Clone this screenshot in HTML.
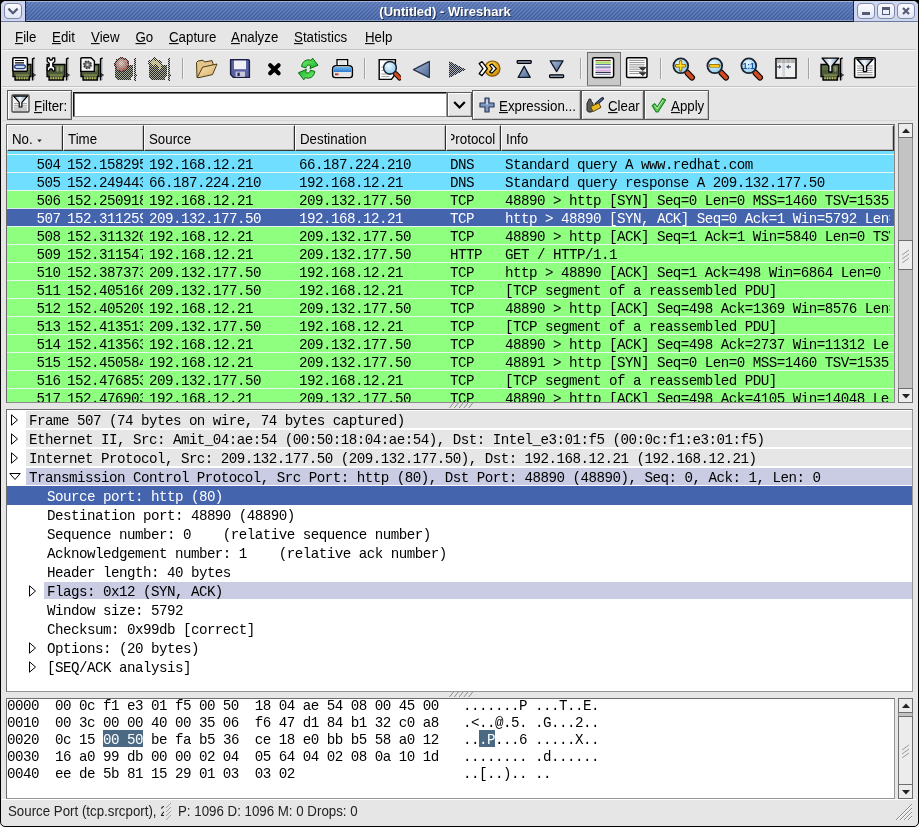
<!DOCTYPE html><html><head><meta charset="utf-8"><title>(Untitled) - Wireshark</title><style>
*{box-sizing:border-box;margin:0;padding:0}
html,body{width:919px;height:827px;overflow:hidden;background:#000}
body{position:relative;font-family:"Liberation Sans",sans-serif;font-size:13px;color:#000}
.a{position:absolute}
.win{left:0;top:0;width:919px;height:827px;background:#e6e6e6;border:1px solid #000;border-radius:6px 6px 5px 5px;overflow:hidden;will-change:transform}
.t{position:absolute;white-space:pre;line-height:1}
.m{font-family:"Liberation Mono",monospace;font-size:14.2px;letter-spacing:-0.52px}
.ui{font-size:13.3px;transform:scaleY(1.09);transform-origin:0 11.3px}
u{text-decoration:underline;text-underline-offset:1px}
.row{position:absolute;left:7px;width:887px;height:17px;overflow:hidden}
.row .t{top:3px}
.sepw{position:absolute;left:7px;width:887px;height:1px}
.hdr{position:absolute;top:125px;height:26px;background:#e6e6e6;border-right:1px solid #2e2e2e;border-bottom:1px solid #3a3a3a;border-left:1px solid #fff;border-top:1px solid #fff;box-shadow:inset -1px -1px 0 #bcbcbc;overflow:hidden}
.hdr .t{top:6.5px;left:4px}
.sb{position:absolute;background:#c3c3c3;border:1px solid #8c8c8c}
.sbb{position:absolute;left:-1px;width:15px;height:15px;background:#ececec;border:1px solid #6e6e6e}
.thumb{position:absolute;left:-1px;width:15px;background:#ececec;border:1px solid #6e6e6e}
.btn{position:absolute;background:#e6e6e6;border:1px solid #5a5a5a;box-shadow:inset 1px 1px 0 #fff, inset -1px -1px 0 #c0c0c0}
</style></head><body>
<div class="a" style="left:0;top:815px;width:919px;height:12px;background:#f0f0f0"></div>
<div class="a win">
<div class="a" style="left:-1px;top:-1px;width:919px;height:827px">
<div class="a" style="left:1px;top:1px;width:917px;height:20px;background:#cdd5ef"></div>
<div class="a" style="left:1px;top:21px;width:917px;height:1px;background:#6c7a9e"></div>
<svg class="a" style="left:25px;top:1px" width="829" height="21" viewBox="0 0 829 21"><defs><pattern id="hat" width="4" height="4" patternUnits="userSpaceOnUse"><rect width="4" height="4" fill="#6080c4"/><path d="M-1 5 L5 -1 M-1 1 L1 -1 M3 5 L5 3" stroke="#4463a6" stroke-width="1.5"/></pattern><linearGradient id="hatg" x1="0" y1="0" x2="0" y2="1"><stop offset="0" stop-color="#fff" stop-opacity="0.10"/><stop offset="1" stop-color="#000" stop-opacity="0.06"/></linearGradient></defs><rect width="829" height="21" fill="url(#hat)"/><rect width="829" height="21" fill="url(#hatg)"/><rect x="0" y="0" width="829" height="1" fill="#a3b3dc"/><rect x="0" y="19" width="829" height="1" fill="#8f9fc4"/><rect x="0" y="20" width="829" height="1" fill="#0c1220"/><rect x="0" y="0" width="1" height="21" fill="#1c2a50"/><rect x="828" y="0" width="1" height="21" fill="#1c2a50"/></svg>
<div class="t" style="left:345px;width:200px;text-align:center;top:5px;font-weight:bold;font-size:13px;color:#fff;text-shadow:1px 1px 0 rgba(0,0,0,0.55)">(Untitled) - Wireshark</div>
<div class="a" style="left:4px;top:3px;width:18px;height:16px;border:1px solid #7f89a8;border-radius:4px;background:linear-gradient(#fbfbff,#e2e6f6)"><svg class="a" style="left:2px;top:3px" width="12" height="9" viewBox="0 0 12 9"><path d="M1.4 1.6 L6 6.2 L10.6 1.6" fill="none" stroke="#565c78" stroke-width="2.3"/></svg></div>
<div class="a" style="left:857px;top:3px;width:18px;height:16px;border:1px solid #7f89a8;border-radius:4px;background:linear-gradient(#fbfbff,#e2e6f6)"><div class="a" style="left:4px;top:8px;width:8px;height:3px;background:#565c78"></div></div>
<div class="a" style="left:877px;top:3px;width:18px;height:16px;border:1px solid #7f89a8;border-radius:4px;background:linear-gradient(#fbfbff,#e2e6f6)"><div class="a" style="left:4px;top:3px;width:8px;height:8px;border:1px solid #565c78;border-top-width:3px"></div></div>
<div class="a" style="left:897px;top:3px;width:18px;height:16px;border:1px solid #7f89a8;border-radius:4px;background:linear-gradient(#fbfbff,#e2e6f6)"><svg class="a" style="left:4px;top:3px" width="8" height="8" viewBox="0 0 8 8"><path d="M1 1 L7 7 M7 1 L1 7" fill="none" stroke="#565c78" stroke-width="2.2"/></svg></div>
<div class="t ui" style="left:15px;top:31px"><u>F</u>ile</div>
<div class="t ui" style="left:52px;top:31px"><u>E</u>dit</div>
<div class="t ui" style="left:91px;top:31px"><u>V</u>iew</div>
<div class="t ui" style="left:135.5px;top:31px"><u>G</u>o</div>
<div class="t ui" style="left:169px;top:31px"><u>C</u>apture</div>
<div class="t ui" style="left:231px;top:31px"><u>A</u>nalyze</div>
<div class="t ui" style="left:294px;top:31px"><u>S</u>tatistics</div>
<div class="t ui" style="left:365px;top:31px"><u>H</u>elp</div>
<div class="a" style="left:2px;top:49px;width:914px;height:1px;background:#c4c4c4"></div>
<div class="a" style="left:2px;top:50px;width:914px;height:1px;background:#f6f6f6"></div>
<svg width="0" height="0" style="position:absolute"><defs>
<linearGradient id="gFun" x1="0" y1="0" x2="1" y2="0"><stop offset="0" stop-color="#7fa0c0"/><stop offset="0.45" stop-color="#f4f8fc"/><stop offset="1" stop-color="#6f90b4"/></linearGradient>
<linearGradient id="gTri" x1="0" y1="0" x2="1" y2="1"><stop offset="0" stop-color="#a9bcdc"/><stop offset="1" stop-color="#4d6692"/></linearGradient>
<radialGradient id="gLens" cx="0.4" cy="0.35" r="0.7"><stop offset="0" stop-color="#e8f8ff"/><stop offset="1" stop-color="#8cc8ec"/></radialGradient>
<radialGradient id="gGold" cx="0.4" cy="0.35" r="0.7"><stop offset="0" stop-color="#ffe060"/><stop offset="1" stop-color="#d08800"/></radialGradient>
<radialGradient id="gStop" cx="0.45" cy="0.4" r="0.6"><stop offset="0" stop-color="#f4e4dc"/><stop offset="1" stop-color="#a05a50"/></radialGradient>
<linearGradient id="gFold" x1="0" y1="0" x2="1" y2="1"><stop offset="0" stop-color="#f8e4b0"/><stop offset="1" stop-color="#d8b070"/></linearGradient>
<linearGradient id="gPrn" x1="0" y1="0" x2="0" y2="1"><stop offset="0" stop-color="#70b8f0"/><stop offset="1" stop-color="#2c78d0"/></linearGradient>
<linearGradient id="gGrn" x1="0" y1="0" x2="1" y2="1"><stop offset="0" stop-color="#78f070"/><stop offset="1" stop-color="#18b428"/></linearGradient>
<pattern id="stip" width="2" height="2" patternUnits="userSpaceOnUse"><rect width="2" height="2" fill="#e6e6e6"/><rect width="1" height="1" fill="#3c3c3c"/><rect x="1" y="1" width="1" height="1" fill="#3c3c3c"/></pattern>
<pattern id="stipd" width="2" height="2" patternUnits="userSpaceOnUse"><rect width="1" height="1" fill="#262626"/><rect x="1" y="1" width="1" height="1" fill="#262626"/></pattern>
<g id="nic">
<path d="M22.6 1 L20.6 2 L20.6 23.6" stroke="#000" stroke-width="1.5" fill="none"/>
<path d="M21.9 3 L21.9 16 M21.9 20 L21.9 23" stroke="#9a9a9a" stroke-width="1" fill="none"/>
<path d="M21.2 16.4 L23.6 18 L21.2 19.8 Z" fill="#505050" stroke="#000" stroke-width="0.6"/>
<path d="M1 7.5 L19 7.5 L19 19.5 L17.5 19.5 L17.5 23 L3 23 L3 19.5 L1 19.5 Z" fill="#4c5838" stroke="#000" stroke-width="1.3"/>
<rect x="2" y="8.6" width="16" height="4.4" fill="#5f7046" opacity="0.8"/>
<rect x="10.6" y="9.5" width="2" height="5" fill="#8c9c74"/><rect x="14.4" y="9.5" width="2" height="5" fill="#8c9c74"/>
<rect x="3.8" y="17.2" width="13" height="2" fill="#74844c"/>
<path d="M5 20.2 v2 M7.5 20.2 v2 M10 20.2 v2 M12.5 20.2 v2 M15 20.2 v2" stroke="#c8c464" stroke-width="1.3"/>
</g>
<g id="nicd">
<path d="M20.4 1.4 L21.8 0.6 L21.8 16.6 L23.6 18.4 L21.8 19.8 L21.8 23.6 L20.4 23.6 Z" fill="#c4c4c4"/>
<path d="M20.4 1.4 L21.8 0.6 L21.8 16.6 L23.6 18.4 L21.8 19.8 L21.8 23.6 L20.4 23.6 Z" fill="url(#stipd)"/>
<path d="M2 7.6 L17.6 7.6 L18.6 8.6 L18.6 19.4 L16.6 20.6 L16.6 23.4 L4 23.4 L2.4 21.6 L0.6 19.4 L0.6 9 Z" fill="#a6ae98"/>
<path d="M2 7.6 L17.6 7.6 L18.6 8.6 L18.6 19.4 L16.6 20.6 L16.6 23.4 L4 23.4 L2.4 21.6 L0.6 19.4 L0.6 9 Z" fill="url(#stipd)"/>
</g>
<g id="funnel"><path d="M0.7 0.7 L17.3 0.7 L10.6 8.5 L10.6 14.3 L7.4 14.3 L7.4 8.5 Z" fill="url(#gFun)" stroke="#000" stroke-width="1.4" stroke-linejoin="round"/></g>
<g id="mag">
<path d="M15.4 15.8 L20 20.6" stroke="#000" stroke-width="6" stroke-linecap="round"/>
<path d="M15.2 15.6 L20 20.6" stroke="#d44a20" stroke-width="3.8" stroke-linecap="round"/>
<circle cx="8.8" cy="8.8" r="7.4" fill="url(#gLens)" stroke="#1c2430" stroke-width="1.8"/>
</g>
</defs></svg>
<div class="a" style="left:587px;top:52px;width:34px;height:34px;background:#c8c8c8;border:1px solid #6c6c6c;border-bottom-color:#8c8c8c"></div>
<svg class="a" style="left:12px;top:57px" width="24" height="24" viewBox="0 0 24 24" ><use href="#nic"/><rect x="0.8" y="0.8" width="14.6" height="13.4" rx="1" fill="#fff" stroke="#000" stroke-width="1.5"/><path d="M3 3.5 h9 M3 5.8 h9" stroke="#000" stroke-width="1.2"/><rect x="2.6" y="8" width="10.8" height="3.6" rx="1.8" fill="#c8dcf4" stroke="#203880" stroke-width="1.3"/></svg>
<svg class="a" style="left:46px;top:57px" width="24" height="24" viewBox="0 0 24 24" ><use href="#nic"/><path d="M1.2 1 L3.3 1 L4 3 L6 3 L6.7 1 L8.8 1 L8.8 4.5 L6.8 6.2 L6.8 9 L8.8 10.6 L8.8 13.8 L6.7 13.8 L6 12 L4 12 L3.3 13.8 L1.2 13.8 L1.2 10.6 L3.2 9 L3.2 6.2 L1.2 4.5 Z" fill="#fff" stroke="#000" stroke-width="1.3" stroke-linejoin="round"/></svg>
<svg class="a" style="left:80px;top:57px" width="24" height="24" viewBox="0 0 24 24" ><use href="#nic"/><path d="M0.8 2 Q0.8 0.8 2 0.8 L11 0.8 L14.4 4 L14.4 14.4 L0.8 14.4 Z" fill="#f4f4f4" stroke="#000" stroke-width="1.4"/><circle cx="7.5" cy="7.8" r="3.6" fill="#707070" stroke="#333" stroke-width="1.6" stroke-dasharray="1.6 1.2"/><circle cx="7.5" cy="7.8" r="1.2" fill="#d8d8d8"/></svg>
<svg class="a" style="left:114px;top:57px" width="24" height="24" viewBox="0 0 24 24" shape-rendering="crispEdges"><use href="#nicd"/><circle cx="7.8" cy="7.8" r="7.4" fill="url(#gStop)"/><circle cx="7.8" cy="7.8" r="6.8" fill="none" stroke="url(#stipd)" stroke-width="1.8"/><circle cx="7.8" cy="7.8" r="5.6" fill="url(#stipd)" opacity="0.3"/></svg>
<svg class="a" style="left:148px;top:57px" width="24" height="24" viewBox="0 0 24 24" shape-rendering="crispEdges"><use href="#nicd"/><path d="M0.4 6 L6.6 0.2 L6.6 3 Q14 3 14 10.4 Q14 13.6 10 13.6 Q10.5 8.4 6.6 8.4 L6.6 11.4 Z" fill="#e0d8a8"/><path d="M0.4 6 L6.6 0.2 L6.6 3 Q14 3 14 10.4 Q14 13.6 10 13.6 Q10.5 8.4 6.6 8.4 L6.6 11.4 Z" fill="none" stroke="url(#stipd)" stroke-width="2.2"/><path d="M0.4 6 L6.6 0.2 L6.6 3 Q14 3 14 10.4 Q14 13.6 10 13.6 Q10.5 8.4 6.6 8.4 L6.6 11.4 Z" fill="url(#stipd)" opacity="0.3"/></svg>
<svg class="a" style="left:194px;top:57px" width="24" height="24" viewBox="0 0 24 24" ><path d="M2.5 5.5 L4 4 L9 3.2 L10.5 5 L18 3.6 L19 6.5 L19 9 L9 11 L5 20.5 L3 20.5 Z" fill="#e4c488" stroke="#4a3a18" stroke-width="1"/><path d="M5 20.6 L3.2 20.6 L8.6 10.2 L23 7 L18.5 17.6 Z" fill="url(#gFold)" stroke="#4a3a18" stroke-width="1" stroke-linejoin="round"/></svg>
<svg class="a" style="left:228px;top:57px" width="24" height="24" viewBox="0 0 24 24" ><path d="M2.6 2.6 L20 2.6 Q21.4 2.6 21.4 4 L21.4 20.4 L5.5 20.4 L2.6 17.5 Z" fill="#5a62a6" stroke="#1a1c40" stroke-width="1.4" stroke-linejoin="round"/><rect x="6" y="3.6" width="12" height="8.6" fill="#f0f0f4"/><rect x="7.6" y="14.6" width="9.4" height="5.2" fill="#c4c8d8"/><rect x="9.4" y="15.6" width="2.4" height="3.4" fill="#2a2c58"/></svg>
<svg class="a" style="left:262px;top:57px" width="24" height="24" viewBox="0 0 24 24" ><path d="M8.2 8.2 L16.6 16.2 M16.6 8.2 L8.2 16.2" stroke="#000" stroke-width="4.2" stroke-linecap="round"/></svg>
<svg class="a" style="left:296px;top:57px" width="24" height="24" viewBox="0 0 24 24" ><path d="M5.6 9.6 C6 4.6 10.6 1.6 15.2 3.4 L16.6 1.2 L22 8.2 L14 11.6 L14.8 8.8 C12.8 7.4 10.6 8.2 10 10.8 Z" fill="url(#gGrn)" stroke="#0a6a10" stroke-width="1" stroke-linejoin="round"/><path d="M5.6 9.6 C6 4.6 10.6 1.6 15.2 3.4 L16.6 1.2 L22 8.2 L14 11.6 L14.8 8.8 C12.8 7.4 10.6 8.2 10 10.8 Z" transform="rotate(180 12.2 12)" fill="url(#gGrn)" stroke="#0a6a10" stroke-width="1" stroke-linejoin="round"/></svg>
<svg class="a" style="left:330px;top:57px" width="24" height="24" viewBox="0 0 24 24" ><path d="M7 9 L7 2.6 L17.6 2.6 L17.6 9" fill="#fff" stroke="#000" stroke-width="1.3"/><path d="M9 5 h6.5 M9 7 h6.5" stroke="#c8c8c8" stroke-width="1"/><path d="M2.6 12 Q2.6 8.6 6.4 8.6 L18.6 8.6 Q22.4 8.6 22.4 12 L22.4 18 Q22.4 20.6 19.6 20.6 L5.4 20.6 Q2.6 20.6 2.6 18 Z" fill="#e4e4e4" stroke="#000" stroke-width="1.4"/><path d="M4.2 10 L20.8 10 Q22 12 21.4 15 L3.6 15 Q3 12 4.2 10 Z" fill="url(#gPrn)"/><rect x="5" y="16.4" width="3.4" height="1.8" fill="#c03020"/></svg>
<svg class="a" style="left:377px;top:57px" width="24" height="24" viewBox="0 0 24 24" ><path d="M2.2 2.6 L18.4 2.6 L18.4 17 L14.4 22.4 L2.2 22.4 Z" fill="#fff" stroke="#000" stroke-width="1.4"/><path d="M4.4 10 h6 M4.4 13.6 h7 M4.4 17 h9 M4.4 19.6 h8" stroke="#a0a0a0" stroke-width="1"/><g transform="translate(5.4,3.2) scale(0.86)"><use href="#mag"/></g></svg>
<svg class="a" style="left:410px;top:57px" width="24" height="24" viewBox="0 0 24 24" ><path d="M3.4 12.6 L19.4 4.4 L19.4 20.6 Z" fill="url(#gTri)" stroke="#26344e" stroke-width="1.2" stroke-linejoin="round"/></svg>
<svg class="a" style="left:444px;top:57px" width="24" height="24" viewBox="0 0 24 24" shape-rendering="crispEdges"><path d="M22 12.6 L5 4 L5 21.2 Z" fill="#aab4c8"/><path d="M22 12.6 L5 4 L5 21.2 Z" fill="url(#stipd)"/></svg>
<svg class="a" style="left:478px;top:57px" width="24" height="24" viewBox="0 0 24 24" ><circle cx="14.4" cy="11.6" r="7.6" fill="url(#gGold)" stroke="#8a5800" stroke-width="1.2"/><path d="M1.2 6.6 L4 4.6 L9.4 11.6 L4 18.6 L1.2 16.6 L5 11.6 Z" fill="#fff" stroke="#000" stroke-width="1.3" stroke-linejoin="round"/><path d="M11.6 8.2 L14 7 L18.4 11.6 L14 16.2 L11.6 15 L14.4 11.6 Z" fill="#fff" stroke="#000" stroke-width="1.2" stroke-linejoin="round"/></svg>
<svg class="a" style="left:514px;top:57px" width="24" height="24" viewBox="0 0 24 24" ><rect x="3.2" y="3.6" width="14" height="2.8" rx="0.8" fill="#8c9cb8" stroke="#000" stroke-width="1.3"/><path d="M10.2 9.4 L16.2 20.4 L4.2 20.4 Z" fill="url(#gTri)" stroke="#101828" stroke-width="1.3" stroke-linejoin="round"/></svg>
<svg class="a" style="left:546px;top:57px" width="24" height="24" viewBox="0 0 24 24" ><rect x="3.6" y="17.8" width="14" height="2.8" rx="0.8" fill="#8c9cb8" stroke="#000" stroke-width="1.3"/><path d="M10.6 14.6 L17 3.8 L4.2 3.8 Z" fill="url(#gTri)" stroke="#101828" stroke-width="1.3" stroke-linejoin="round"/></svg>
<svg class="a" style="left:591px;top:57px" width="24" height="24" viewBox="0 0 24 24" ><rect x="1.6" y="0.8" width="21" height="19.6" rx="1.6" fill="#fff" stroke="#000" stroke-width="1.5"/><path d="M4.4 3.6 h15.4" stroke="#6a2820" stroke-width="1"/><path d="M4.4 5.6 h15.4" stroke="#a8e060" stroke-width="2.2"/><path d="M4.4 7.6 h15.4" stroke="#5a70a0" stroke-width="1"/><path d="M4.4 10.4 h15.4" stroke="#8c94b4" stroke-width="2.2"/><path d="M4.4 13.2 h15.4" stroke="#e070d8" stroke-width="1"/><path d="M4.4 15.4 h15.4" stroke="#303048" stroke-width="1.2"/><path d="M4.4 17.4 h15.4" stroke="#8090a8" stroke-width="1.4"/></svg>
<svg class="a" style="left:625px;top:57px" width="24" height="24" viewBox="0 0 24 24" ><rect x="1.6" y="0.8" width="20.4" height="19.6" rx="1.2" fill="#fff" stroke="#000" stroke-width="1.5"/><path d="M4.2 3.4 h15.4 M4.2 5.6 h15.4 M4.2 7.8 h15.4 M4.2 10 h15.4 M4.2 12.2 h15.4 M4.2 14.4 h15.4 M4.2 16.6 h15.4" stroke="#909090" stroke-width="1"/><path d="M14.4 10.4 L21 10.4 L17.7 13.6 Z M14.4 15.6 L21 15.6 L17.7 18.8 Z" fill="#303030" stroke="#303030" stroke-width="0.8"/></svg>
<svg class="a" style="left:672px;top:57px" width="24" height="24" viewBox="0 0 24 24" ><use href="#mag"/><path d="M8.6 4.6 v8.4 M4.4 8.8 h8.4" stroke="#806000" stroke-width="3.4" stroke-linecap="round"/><path d="M8.6 5 v7.6 M4.8 8.8 h7.6" stroke="#ffd820" stroke-width="2" stroke-linecap="round"/></svg>
<svg class="a" style="left:706px;top:57px" width="24" height="24" viewBox="0 0 24 24" ><use href="#mag"/><path d="M4.4 8.8 h8.4" stroke="#806000" stroke-width="3.6" stroke-linecap="round"/><path d="M4.8 8.8 h7.6" stroke="#ffc818" stroke-width="2.2" stroke-linecap="round"/></svg>
<svg class="a" style="left:740px;top:57px" width="24" height="24" viewBox="0 0 24 24" ><use href="#mag"/><text x="8.7" y="11.8" text-anchor="middle" style="font-family:Liberation Sans,sans-serif;font-weight:bold;font-size:8.4px" fill="#1858a8">1:1</text></svg>
<svg class="a" style="left:774px;top:57px" width="24" height="24" viewBox="0 0 24 24" ><rect x="2" y="1.6" width="20" height="19.4" fill="#f0f0f0" stroke="#000" stroke-width="1.5"/><rect x="2.8" y="2.4" width="18.4" height="3.6" fill="#b0b0b0"/><path d="M7.4 2.4 v3.6 M12 2.4 v3.6 M16.6 2.4 v3.6" stroke="#d8d8d8" stroke-width="0.8"/><rect x="8.4" y="6" width="2.6" height="14.2" fill="#d4d4d4"/><path d="M2.8 9.8 h4" stroke="#44546c" stroke-width="1.3"/><path d="M5 7.6 L7.4 9.8 L5 12 Z" fill="#44546c"/><path d="M12.6 9.8 h4.4" stroke="#44546c" stroke-width="1.3"/><path d="M14.8 7.6 L12.4 9.8 L14.8 12 Z" fill="#44546c"/></svg>
<svg class="a" style="left:820px;top:57px" width="24" height="24" viewBox="0 0 24 24" ><use href="#nic"/><g transform="translate(1.4,0.4) scale(1,1.02)"><use href="#funnel"/></g></svg>
<svg class="a" style="left:853px;top:57px" width="24" height="24" viewBox="0 0 24 24" ><rect x="1.6" y="0.8" width="20.6" height="19.6" rx="1.2" fill="#fff" stroke="#000" stroke-width="1.5"/><path d="M4.2 9 h15.4 M4.2 11.2 h15.4 M4.2 13.4 h15.4 M4.2 15.6 h15.4 M4.2 17.8 h15.4" stroke="#909090" stroke-width="1"/><g transform="translate(3.2,1.4) scale(0.98,0.92)"><use href="#funnel"/></g></svg>
<div class="a" style="left:2px;top:86px;width:914px;height:1px;background:#c4c4c4"></div>
<div class="a" style="left:2px;top:87px;width:914px;height:1px;background:#f6f6f6"></div>
<div class="a" style="left:182px;top:58px;width:1px;height:21px;background:#a4a4a4"></div>
<div class="a" style="left:183px;top:58px;width:1px;height:21px;background:#f2f2f2"></div>
<div class="a" style="left:364px;top:58px;width:1px;height:21px;background:#a4a4a4"></div>
<div class="a" style="left:365px;top:58px;width:1px;height:21px;background:#f2f2f2"></div>
<div class="a" style="left:580px;top:58px;width:1px;height:21px;background:#a4a4a4"></div>
<div class="a" style="left:581px;top:58px;width:1px;height:21px;background:#f2f2f2"></div>
<div class="a" style="left:660px;top:58px;width:1px;height:21px;background:#a4a4a4"></div>
<div class="a" style="left:661px;top:58px;width:1px;height:21px;background:#f2f2f2"></div>
<div class="a" style="left:808px;top:58px;width:1px;height:21px;background:#a4a4a4"></div>
<div class="a" style="left:809px;top:58px;width:1px;height:21px;background:#f2f2f2"></div>
<div class="btn" style="left:7px;top:90px;width:65px;height:30px"></div>
<div class="t ui" style="left:34px;top:100px"><u>F</u>ilter:</div>
<div class="a" style="left:73px;top:92px;width:374px;height:25px;background:#fff;border:1px solid #9a9a9a;border-top:1px solid #101010;border-left:1px solid #101010;box-shadow:inset 1px 1px 0 #7a7a7a"></div>
<div class="btn" style="left:447px;top:92px;width:25px;height:25px"></div>
<svg class="a" style="left:453px;top:100px" width="13" height="10" viewBox="0 0 13 10"><path d="M1.2 2 L6.5 7.5 L11.8 2" fill="none" stroke="#000" stroke-width="2.2"/></svg>
<div class="btn" style="left:472px;top:90px;width:109px;height:30px"></div>
<div class="t ui" style="left:499px;top:100px"><u>E</u>xpression...</div>
<div class="btn" style="left:581px;top:90px;width:63px;height:30px"></div>
<div class="t ui" style="left:608px;top:100px"><u>C</u>lear</div>
<div class="btn" style="left:644px;top:90px;width:65px;height:30px"></div>
<div class="t ui" style="left:671px;top:100px"><u>A</u>pply</div>
<svg class="a" style="left:11px;top:94px" width="20" height="20" viewBox="0 0 20 20" ><rect x="1" y="1" width="17" height="17" rx="1" fill="#f4f4f4" stroke="#444" stroke-width="1.3"/><path d="M3 9.6 h13 M3 11.8 h13 M3 14 h13 M3 16 h13" stroke="#a0a0a0" stroke-width="1"/><g transform="translate(2,1.6) scale(0.84,0.8)"><use href="#funnel"/></g></svg>
<svg class="a" style="left:479px;top:97px" width="16" height="16" viewBox="0 0 16 16" ><path d="M6 1 h4 v5 h5 v4 h-5 v5 h-4 v-5 h-5 v-4 h5 Z" fill="#8098c0" stroke="#283858" stroke-width="1.2" stroke-linejoin="round"/><path d="M7 2.4 h2 v5 h-2 Z" fill="#c0d0e8"/></svg>
<svg class="a" style="left:586px;top:96px" width="18" height="18" viewBox="0 0 18 18" ><path d="M2 5.4 L3.2 3 L4.6 3 L5.4 5.4 L7 7.4 L7 14.6 L5.6 16 L2.4 16 L1 14.6 L1 7.4 Z" fill="#5c5c5c" stroke="#202020" stroke-width="1"/><path d="M16.4 2.6 L10.4 8" stroke="#1c2848" stroke-width="3.2" stroke-linecap="round"/><path d="M16 3 L11 7.4" stroke="#4a64a0" stroke-width="1.2" stroke-linecap="round"/><path d="M4.6 10.6 L12.8 7 L15 11.4 L7 15.6 Z" fill="#e8b820" stroke="#5a4400" stroke-width="1" stroke-linejoin="round"/></svg>
<svg class="a" style="left:651px;top:97px" width="16" height="16" viewBox="0 0 16 16" ><path d="M1.2 8.6 L3.6 6.6 L6.2 10 L11.8 1.4 L14.6 3 L7 15 L5.2 15 Z" fill="#5ccc54" stroke="#1c7a20" stroke-width="1.1" stroke-linejoin="round"/><path d="M3.6 8.2 L6.2 11.6 L12 3" stroke="#b8f0b0" stroke-width="1" fill="none"/></svg>
<div class="a" style="left:2px;top:120px;width:911px;height:1px;background:#d6d6d6"></div>
<div class="a" style="left:6px;top:124px;width:889px;height:279px;background:#fff;border:1px solid #8a8a8a;border-top-color:#6a6a6a;border-left-color:#6a6a6a"></div>
<div class="hdr" style="left:7px;width:56px"><div class="t ui">No. </div></div>
<div class="hdr" style="left:63px;width:81px"><div class="t ui">Time</div></div>
<div class="hdr" style="left:144px;width:151px"><div class="t ui">Source</div></div>
<div class="hdr" style="left:295px;width:151px"><div class="t ui">Destination</div></div>
<div class="hdr" style="left:446px;width:55px"><div class="a" style="left:4px;top:0;width:46px;height:24px;overflow:hidden"><div class="t ui" style="left:-4.5px">Protocol</div></div></div>
<div class="hdr" style="left:501px;width:393px"><div class="t ui">Info</div></div>
<svg class="a" style="left:37px;top:139px" width="5" height="4" viewBox="0 0 5 4"><path d="M0.3 0.5 L4.7 0.5 L2.5 3.2 Z" fill="#222"/></svg>
<div class="a" style="left:0;top:151px;width:919px;height:251px;overflow:hidden">
<div class="sepw" style="top:-15px;background:#e8f6f0"></div>
<div class="row" style="top:-14px;background:#70dfff;color:#000"><div class="t m" style="left:0;width:53.5px;text-align:right"></div><div class="a" style="left:60px;top:0;width:75.5px;height:17px;overflow:hidden"><div class="t m" style="left:0"></div></div><div class="t m" style="left:142px"></div><div class="t m" style="left:292px"></div><div class="t m" style="left:443px"></div><div class="a" style="left:498px;top:0;width:385px;height:17px;overflow:hidden"><div class="t m" style="left:0"></div></div></div>
<div class="sepw" style="top:3px;background:#e8f6f0"></div>
<div class="row" style="top:4px;background:#70dfff;color:#000"><div class="t m" style="left:0;width:53.5px;text-align:right">504</div><div class="a" style="left:60px;top:0;width:75.5px;height:17px;overflow:hidden"><div class="t m" style="left:0">152.158295</div></div><div class="t m" style="left:142px">192.168.12.21</div><div class="t m" style="left:292px">66.187.224.210</div><div class="t m" style="left:443px">DNS</div><div class="a" style="left:498px;top:0;width:385px;height:17px;overflow:hidden"><div class="t m" style="left:0">Standard query A www.redhat.com</div></div></div>
<div class="sepw" style="top:21px;background:#e8f6f0"></div>
<div class="row" style="top:22px;background:#70dfff;color:#000"><div class="t m" style="left:0;width:53.5px;text-align:right">505</div><div class="a" style="left:60px;top:0;width:75.5px;height:17px;overflow:hidden"><div class="t m" style="left:0">152.249443</div></div><div class="t m" style="left:142px">66.187.224.210</div><div class="t m" style="left:292px">192.168.12.21</div><div class="t m" style="left:443px">DNS</div><div class="a" style="left:498px;top:0;width:385px;height:17px;overflow:hidden"><div class="t m" style="left:0">Standard query response A 209.132.177.50</div></div></div>
<div class="sepw" style="top:39px;background:#e8f6f0"></div>
<div class="row" style="top:40px;background:#8fff80;color:#000"><div class="t m" style="left:0;width:53.5px;text-align:right">506</div><div class="a" style="left:60px;top:0;width:75.5px;height:17px;overflow:hidden"><div class="t m" style="left:0">152.250918</div></div><div class="t m" style="left:142px">192.168.12.21</div><div class="t m" style="left:292px">209.132.177.50</div><div class="t m" style="left:443px">TCP</div><div class="a" style="left:498px;top:0;width:385px;height:17px;overflow:hidden"><div class="t m" style="left:0">48890 &gt; http [SYN] Seq=0 Len=0 MSS=1460 TSV=1535</div></div></div>
<div class="sepw" style="top:57px;background:#dfe6f4"></div>
<div class="row" style="top:58px;background:#4464ae;color:#fff"><div class="t m" style="left:0;width:53.5px;text-align:right">507</div><div class="a" style="left:60px;top:0;width:75.5px;height:17px;overflow:hidden"><div class="t m" style="left:0">152.311259</div></div><div class="t m" style="left:142px">209.132.177.50</div><div class="t m" style="left:292px">192.168.12.21</div><div class="t m" style="left:443px">TCP</div><div class="a" style="left:498px;top:0;width:385px;height:17px;overflow:hidden"><div class="t m" style="left:0">http &gt; 48890 [SYN, ACK] Seq=0 Ack=1 Win=5792 Len=0</div></div></div>
<div class="sepw" style="top:75px;background:#e8f6f0"></div>
<div class="row" style="top:76px;background:#8fff80;color:#000"><div class="t m" style="left:0;width:53.5px;text-align:right">508</div><div class="a" style="left:60px;top:0;width:75.5px;height:17px;overflow:hidden"><div class="t m" style="left:0">152.311320</div></div><div class="t m" style="left:142px">192.168.12.21</div><div class="t m" style="left:292px">209.132.177.50</div><div class="t m" style="left:443px">TCP</div><div class="a" style="left:498px;top:0;width:385px;height:17px;overflow:hidden"><div class="t m" style="left:0">48890 &gt; http [ACK] Seq=1 Ack=1 Win=5840 Len=0 TSV</div></div></div>
<div class="sepw" style="top:93px;background:#e8f6f0"></div>
<div class="row" style="top:94px;background:#8fff80;color:#000"><div class="t m" style="left:0;width:53.5px;text-align:right">509</div><div class="a" style="left:60px;top:0;width:75.5px;height:17px;overflow:hidden"><div class="t m" style="left:0">152.311547</div></div><div class="t m" style="left:142px">192.168.12.21</div><div class="t m" style="left:292px">209.132.177.50</div><div class="t m" style="left:443px">HTTP</div><div class="a" style="left:498px;top:0;width:385px;height:17px;overflow:hidden"><div class="t m" style="left:0">GET / HTTP/1.1</div></div></div>
<div class="sepw" style="top:111px;background:#e8f6f0"></div>
<div class="row" style="top:112px;background:#8fff80;color:#000"><div class="t m" style="left:0;width:53.5px;text-align:right">510</div><div class="a" style="left:60px;top:0;width:75.5px;height:17px;overflow:hidden"><div class="t m" style="left:0">152.387373</div></div><div class="t m" style="left:142px">209.132.177.50</div><div class="t m" style="left:292px">192.168.12.21</div><div class="t m" style="left:443px">TCP</div><div class="a" style="left:498px;top:0;width:385px;height:17px;overflow:hidden"><div class="t m" style="left:0">http &gt; 48890 [ACK] Seq=1 Ack=498 Win=6864 Len=0 T</div></div></div>
<div class="sepw" style="top:129px;background:#e8f6f0"></div>
<div class="row" style="top:130px;background:#8fff80;color:#000"><div class="t m" style="left:0;width:53.5px;text-align:right">511</div><div class="a" style="left:60px;top:0;width:75.5px;height:17px;overflow:hidden"><div class="t m" style="left:0">152.405166</div></div><div class="t m" style="left:142px">209.132.177.50</div><div class="t m" style="left:292px">192.168.12.21</div><div class="t m" style="left:443px">TCP</div><div class="a" style="left:498px;top:0;width:385px;height:17px;overflow:hidden"><div class="t m" style="left:0">[TCP segment of a reassembled PDU]</div></div></div>
<div class="sepw" style="top:147px;background:#e8f6f0"></div>
<div class="row" style="top:148px;background:#8fff80;color:#000"><div class="t m" style="left:0;width:53.5px;text-align:right">512</div><div class="a" style="left:60px;top:0;width:75.5px;height:17px;overflow:hidden"><div class="t m" style="left:0">152.405209</div></div><div class="t m" style="left:142px">192.168.12.21</div><div class="t m" style="left:292px">209.132.177.50</div><div class="t m" style="left:443px">TCP</div><div class="a" style="left:498px;top:0;width:385px;height:17px;overflow:hidden"><div class="t m" style="left:0">48890 &gt; http [ACK] Seq=498 Ack=1369 Win=8576 Len=0</div></div></div>
<div class="sepw" style="top:165px;background:#e8f6f0"></div>
<div class="row" style="top:166px;background:#8fff80;color:#000"><div class="t m" style="left:0;width:53.5px;text-align:right">513</div><div class="a" style="left:60px;top:0;width:75.5px;height:17px;overflow:hidden"><div class="t m" style="left:0">152.413513</div></div><div class="t m" style="left:142px">209.132.177.50</div><div class="t m" style="left:292px">192.168.12.21</div><div class="t m" style="left:443px">TCP</div><div class="a" style="left:498px;top:0;width:385px;height:17px;overflow:hidden"><div class="t m" style="left:0">[TCP segment of a reassembled PDU]</div></div></div>
<div class="sepw" style="top:183px;background:#e8f6f0"></div>
<div class="row" style="top:184px;background:#8fff80;color:#000"><div class="t m" style="left:0;width:53.5px;text-align:right">514</div><div class="a" style="left:60px;top:0;width:75.5px;height:17px;overflow:hidden"><div class="t m" style="left:0">152.413563</div></div><div class="t m" style="left:142px">192.168.12.21</div><div class="t m" style="left:292px">209.132.177.50</div><div class="t m" style="left:443px">TCP</div><div class="a" style="left:498px;top:0;width:385px;height:17px;overflow:hidden"><div class="t m" style="left:0">48890 &gt; http [ACK] Seq=498 Ack=2737 Win=11312 Len</div></div></div>
<div class="sepw" style="top:201px;background:#e8f6f0"></div>
<div class="row" style="top:202px;background:#8fff80;color:#000"><div class="t m" style="left:0;width:53.5px;text-align:right">515</div><div class="a" style="left:60px;top:0;width:75.5px;height:17px;overflow:hidden"><div class="t m" style="left:0">152.450584</div></div><div class="t m" style="left:142px">192.168.12.21</div><div class="t m" style="left:292px">209.132.177.50</div><div class="t m" style="left:443px">TCP</div><div class="a" style="left:498px;top:0;width:385px;height:17px;overflow:hidden"><div class="t m" style="left:0">48891 &gt; http [SYN] Seq=0 Len=0 MSS=1460 TSV=1535</div></div></div>
<div class="sepw" style="top:219px;background:#e8f6f0"></div>
<div class="row" style="top:220px;background:#8fff80;color:#000"><div class="t m" style="left:0;width:53.5px;text-align:right">516</div><div class="a" style="left:60px;top:0;width:75.5px;height:17px;overflow:hidden"><div class="t m" style="left:0">152.476853</div></div><div class="t m" style="left:142px">209.132.177.50</div><div class="t m" style="left:292px">192.168.12.21</div><div class="t m" style="left:443px">TCP</div><div class="a" style="left:498px;top:0;width:385px;height:17px;overflow:hidden"><div class="t m" style="left:0">[TCP segment of a reassembled PDU]</div></div></div>
<div class="sepw" style="top:237px;background:#e8f6f0"></div>
<div class="row" style="top:238px;background:#8fff80;color:#000"><div class="t m" style="left:0;width:53.5px;text-align:right">517</div><div class="a" style="left:60px;top:0;width:75.5px;height:17px;overflow:hidden"><div class="t m" style="left:0">152.476903</div></div><div class="t m" style="left:142px">192.168.12.21</div><div class="t m" style="left:292px">209.132.177.50</div><div class="t m" style="left:443px">TCP</div><div class="a" style="left:498px;top:0;width:385px;height:17px;overflow:hidden"><div class="t m" style="left:0">48890 &gt; http [ACK] Seq=498 Ack=4105 Win=14048 Len</div></div></div>
</div>
<div class="sb" style="left:898px;top:123px;width:15px;height:280px"><div class="sbb" style="top:-1px"><svg class="a" style="left:3px;top:4px" width="8" height="6" viewBox="0 0 8 6"><path d="M0 5 L4 0.5 L8 5 Z" fill="#222"/></svg></div><div class="thumb" style="top:116px;height:30px"><svg class="a" style="left:2px;top:8px" width="10" height="14" viewBox="0 0 10 14"><path d="M1 6 L8 1 M1 10 L8 5 M1 14 L8 9" stroke="#9a9a9a" stroke-width="1" fill="none"/></svg></div><div class="sbb" style="top:264px"><svg class="a" style="left:3px;top:4px" width="8" height="6" viewBox="0 0 8 6"><path d="M0 1 L4 5.5 L8 1 Z" fill="#222"/></svg></div></div>
<div class="a" style="left:6px;top:409px;width:907px;height:283px;background:#fff;border:1px solid #969696;border-top-color:#6e6e6e;border-left-color:#6e6e6e"></div>
<div class="a" style="left:26px;top:411px;width:886px;height:17px;background:#e6e6e6"></div>
<div class="t m" style="left:29px;top:414px;color:#000">Frame 507 (74 bytes on wire, 74 bytes captured)</div>
<svg class="a" style="left:11px;top:414px" width="8" height="12" viewBox="0 0 8 12"><path d="M0.5 0.8 L6.5 6 L0.5 11.2 Z" fill="#fff" stroke="#000" stroke-width="1"/></svg>
<div class="a" style="left:26px;top:430px;width:886px;height:17px;background:#e6e6e6"></div>
<div class="t m" style="left:29px;top:433px;color:#000">Ethernet II, Src: Amit_04:ae:54 (00:50:18:04:ae:54), Dst: Intel_e3:01:f5 (00:0c:f1:e3:01:f5)</div>
<svg class="a" style="left:11px;top:433px" width="8" height="12" viewBox="0 0 8 12"><path d="M0.5 0.8 L6.5 6 L0.5 11.2 Z" fill="#fff" stroke="#000" stroke-width="1"/></svg>
<div class="a" style="left:26px;top:449px;width:886px;height:17px;background:#e6e6e6"></div>
<div class="t m" style="left:29px;top:452px;color:#000">Internet Protocol, Src: 209.132.177.50 (209.132.177.50), Dst: 192.168.12.21 (192.168.12.21)</div>
<svg class="a" style="left:11px;top:452px" width="8" height="12" viewBox="0 0 8 12"><path d="M0.5 0.8 L6.5 6 L0.5 11.2 Z" fill="#fff" stroke="#000" stroke-width="1"/></svg>
<div class="a" style="left:26px;top:468px;width:886px;height:17px;background:#c9cce3"></div>
<div class="t m" style="left:29px;top:471px;color:#000">Transmission Control Protocol, Src Port: http (80), Dst Port: 48890 (48890), Seq: 0, Ack: 1, Len: 0</div>
<svg class="a" style="left:9px;top:473px" width="12" height="8" viewBox="0 0 12 8"><path d="M0.8 0.5 L11.2 0.5 L6 6.5 Z" fill="#fff" stroke="#000" stroke-width="1"/></svg>
<div class="a" style="left:7px;top:486px;width:905px;height:19px;background:#4464ae"></div>
<div class="t m" style="left:47px;top:490px;color:#fff">Source port: http (80)</div>
<div class="t m" style="left:47px;top:509px;color:#000">Destination port: 48890 (48890)</div>
<div class="t m" style="left:47px;top:528px;color:#000">Sequence number: 0    (relative sequence number)</div>
<div class="t m" style="left:47px;top:547px;color:#000">Acknowledgement number: 1    (relative ack number)</div>
<div class="t m" style="left:47px;top:566px;color:#000">Header length: 40 bytes</div>
<div class="a" style="left:44px;top:582px;width:868px;height:17px;background:#c9cce3"></div>
<div class="t m" style="left:47px;top:585px;color:#000">Flags: 0x12 (SYN, ACK)</div>
<svg class="a" style="left:29px;top:585px" width="8" height="12" viewBox="0 0 8 12"><path d="M0.5 0.8 L6.5 6 L0.5 11.2 Z" fill="#fff" stroke="#000" stroke-width="1"/></svg>
<div class="t m" style="left:47px;top:604px;color:#000">Window size: 5792</div>
<div class="t m" style="left:47px;top:623px;color:#000">Checksum: 0x99db [correct]</div>
<div class="t m" style="left:47px;top:642px;color:#000">Options: (20 bytes)</div>
<svg class="a" style="left:29px;top:642px" width="8" height="12" viewBox="0 0 8 12"><path d="M0.5 0.8 L6.5 6 L0.5 11.2 Z" fill="#fff" stroke="#000" stroke-width="1"/></svg>
<div class="t m" style="left:47px;top:661px;color:#000">[SEQ/ACK analysis]</div>
<svg class="a" style="left:29px;top:661px" width="8" height="12" viewBox="0 0 8 12"><path d="M0.5 0.8 L6.5 6 L0.5 11.2 Z" fill="#fff" stroke="#000" stroke-width="1"/></svg>
<div class="a" style="left:6px;top:698px;width:889px;height:101px;background:#fff;border:1px solid #969696;border-top-color:#6e6e6e;border-left-color:#6e6e6e"></div>
<div class="t m" style="left:7px;top:699px">0000</div>
<div class="t m" style="left:55px;top:699px">00 0c f1 e3 01 f5 00 50  18 04 ae 54 08 00 45 00</div>
<div class="t m" style="left:463px;top:699px">.......P ...T..E.</div>
<div class="t m" style="left:7px;top:716px">0010</div>
<div class="t m" style="left:55px;top:716px">00 3c 00 00 40 00 35 06  f6 47 d1 84 b1 32 c0 a8</div>
<div class="t m" style="left:463px;top:716px">.&lt;..@.5. .G...2..</div>
<div class="a" style="left:103px;top:730px;width:40px;height:17px;background:#4b6983"></div>
<div class="a" style="left:479px;top:730px;width:16px;height:17px;background:#4b6983"></div>
<div class="t m" style="left:7px;top:733px">0020</div>
<div class="t m" style="left:55px;top:733px">0c 15 <span style="color:#fff">00 50</span> be fa b5 36  ce 18 e0 bb b5 58 a0 12</div>
<div class="t m" style="left:463px;top:733px">..<span style="color:#fff">.P</span>...6 .....X..</div>
<div class="t m" style="left:7px;top:750px">0030</div>
<div class="t m" style="left:55px;top:750px">16 a0 99 db 00 00 02 04  05 64 04 02 08 0a 10 1d</div>
<div class="t m" style="left:463px;top:750px">........ .d......</div>
<div class="t m" style="left:7px;top:767px">0040</div>
<div class="t m" style="left:55px;top:767px">ee de 5b 81 15 29 01 03  03 02</div>
<div class="t m" style="left:463px;top:767px">..[..).. ..</div>
<div class="sb" style="left:898px;top:698px;width:15px;height:101px"><div class="sbb" style="top:-1px"><svg class="a" style="left:3px;top:4px" width="8" height="6" viewBox="0 0 8 6"><path d="M0 5 L4 0.5 L8 5 Z" fill="#222"/></svg></div><div class="thumb" style="top:17px;height:69px"><svg class="a" style="left:2px;top:27px" width="10" height="14" viewBox="0 0 10 14"><path d="M1 6 L8 1 M1 10 L8 5 M1 14 L8 9" stroke="#9a9a9a" stroke-width="1" fill="none"/></svg></div><div class="sbb" style="top:85px"><svg class="a" style="left:3px;top:4px" width="8" height="6" viewBox="0 0 8 6"><path d="M0 1 L4 5.5 L8 1 Z" fill="#222"/></svg></div></div>
<svg class="a" style="left:449px;top:403px" width="26" height="5" viewBox="0 0 26 5"><path d="M0.5 5 L4.5 0 M5.3 5 L9.3 0 M10.1 5 L14.1 0 M14.9 5 L18.9 0 M19.7 5 L23.7 0" stroke="#8c8c8c" stroke-width="1" fill="none"/></svg>
<svg class="a" style="left:449px;top:692px" width="26" height="5" viewBox="0 0 26 5"><path d="M0.5 5 L4.5 0 M5.3 5 L9.3 0 M10.1 5 L14.1 0 M14.9 5 L18.9 0 M19.7 5 L23.7 0" stroke="#8c8c8c" stroke-width="1" fill="none"/></svg>
<div class="a" style="left:2px;top:799px;width:914px;height:1px;background:#fff"></div>
<div class="a" style="left:6px;top:802px;width:158px;height:20px;overflow:hidden"><div class="t ui" style="left:2px;top:3px;color:#222">Source Port (tcp.srcport), 2 bytes</div></div>
<div class="t ui" style="left:178px;top:805px;color:#222">P: 1096 D: 1096 M: 0 Drops: 0</div>
<svg class="a" style="left:166px;top:802px" width="6" height="20" viewBox="0 0 6 20"><path d="M0 6 L5 1 M0 10 L5 5 M0 14 L5 9 M0 18 L5 13" stroke="#a0a0a0" stroke-width="1" fill="none"/></svg>
<svg class="a" style="left:895px;top:803px" width="18" height="18" viewBox="0 0 18 18"><path d="M2 17 L17 2 M6 17 L17 6 M10 17 L17 10 M14 17 L17 14" stroke="#fff" stroke-width="1" fill="none"/><path d="M1 17 L17 1 M5 17 L17 5 M9 17 L17 9 M13 17 L17 13" stroke="#8a8a8a" stroke-width="1" fill="none"/></svg>
</div></div></body></html>
